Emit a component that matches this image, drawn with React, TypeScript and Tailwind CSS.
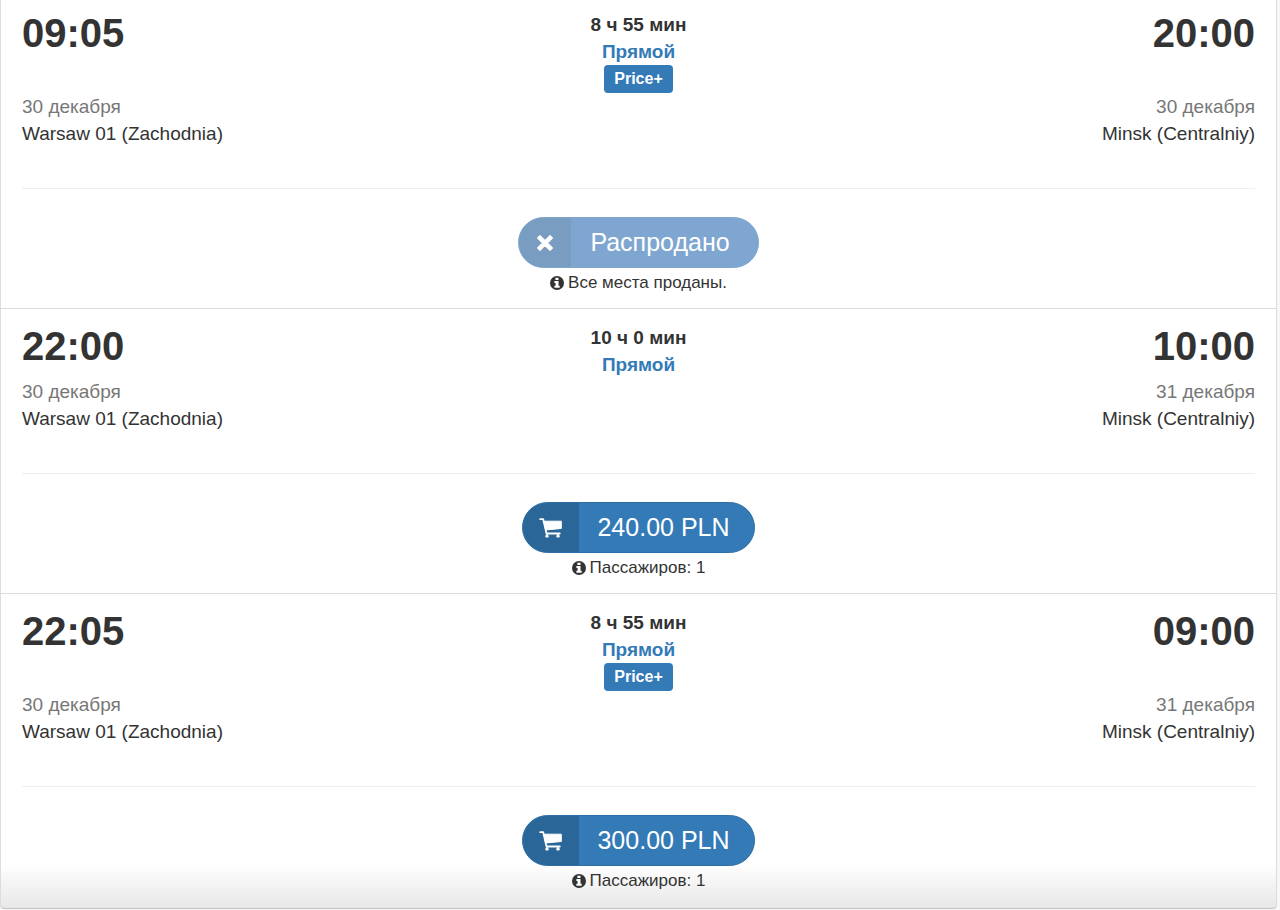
interface Trip {
  departure: string; arrival: string
  departureDate: string; arrivalDate: string
  duration: string; pricePlus: boolean
  price?: string; note: string
}

const trips: Trip[] = [
  {
    departure: '09:05', arrival: '20:00', departureDate: '30 декабря', arrivalDate: '30 декабря',
    duration: '8 ч 55 мин', pricePlus: true, note: 'Все места проданы.',
  },
  {
    departure: '22:00', arrival: '10:00', departureDate: '30 декабря', arrivalDate: '31 декабря',
    duration: '10 ч 0 мин', pricePlus: false, price: '240.00 PLN', note: 'Пассажиров: 1',
  },
  {
    departure: '22:05', arrival: '09:00', departureDate: '30 декабря', arrivalDate: '31 декабря',
    duration: '8 ч 55 мин', pricePlus: true, price: '300.00 PLN', note: 'Пассажиров: 1',
  },
]

function CartIcon() {
  return (
    <svg viewBox="0 0 24 20" className="h-5 w-6" fill="none" stroke="currentColor" strokeLinecap="round" strokeLinejoin="round" aria-hidden="true">
      <path d="M1.200 1.200h3l3.300 14.300h13.300M8 15.500v2M19 15.500v2" strokeWidth="1.8" />
      <path d="M5.200 3.200h17.100v7.300L7.100 11.900z" fill="currentColor" strokeWidth="1" />
      <path d="M7.500 18.300h1M18.500 18.300h1" strokeWidth="2.600" />
    </svg>
  )
}

function CrossIcon() {
  return (
    <svg viewBox="0 0 18 18" className="h-[18px] w-[18px]" fill="currentColor" stroke="currentColor" strokeLinejoin="round" aria-hidden="true">
      <path d="M9 6.700l5-5L16.300 4l-5 5 5 5-2.300 2.300-5-5-5 5L1.700 14l5-5-5-5L4 1.700z" strokeWidth="1.4" />
    </svg>
  )
}

function InfoIcon() {
  return (
    <svg viewBox="0 0 14 14" className="h-3.5 w-3.5 shrink-0" aria-hidden="true">
      <circle cx="7" cy="7" r="7" fill="currentColor" />
      <path d="M5.400 1.800h3.100v2.300H5.400zM4.400 5.100h4.100v4.600h1.200v2H4.400v-2h1.200V7H4.400z" fill="white" />
    </svg>
  )
}

function BuyButton({ price }: { price?: string }) {
  return (
    <button
      type="button"
      disabled={!price}
      className="flex h-[51px] overflow-hidden rounded-full border border-[#2e6da4] bg-[#337ab7] text-[25px] text-white disabled:border-[#7ea6d0] disabled:bg-[#7ea6d0]"
    >
      <span className={price ? 'flex h-full items-center bg-[#2b6699] px-4' : 'flex h-full items-center bg-[#789dc1] px-[17px]'}>
        {price ? <CartIcon /> : <CrossIcon />}
      </span>
      <span className={price ? 'flex h-full items-center pr-6 pl-[18px]' : 'flex h-full items-center pr-7 pl-[19px]'}>
        {price ?? 'Распродано'}
      </span>
    </button>
  )
}

function TripRow({ trip }: { trip: Trip }) {
  return (
    <li className="border-b border-[#ddd] px-[21px] pt-[15px] pb-3 first:pt-[11px] last:rounded-b last:border-[#c4c4c4] last:pb-3.5">
      <div className="grid grid-cols-3">
        <time className="text-[40px] leading-11 font-bold">{trip.departure}</time>
        <div className="flex flex-col items-center font-bold">
          <span>{trip.duration}</span>
          <a href="#route" className="text-[#337ab7]">Прямой</a>
          {trip.pricePlus && (
            <span className="rounded bg-[#337ab7] px-2.5 text-base leading-7 text-white">Price+</span>
          )}
        </div>
        <time className="text-right text-[40px] leading-11 font-bold">{trip.arrival}</time>
      </div>
      <div className="flex justify-between">
        <div>
          <div className="text-[#777]">{trip.departureDate}</div>
          <div>Warsaw 01 (Zachodnia)</div>
        </div>
        <div className="text-right">
          <div className="text-[#777]">{trip.arrivalDate}</div>
          <div>Minsk (Centralniy)</div>
        </div>
      </div>
      <hr className="mt-[41px] mb-7 border-[#eee]" />
      <div className="flex flex-col items-center gap-px">
        <BuyButton price={trip.price} />
        <div className="flex items-center gap-1 text-[17px] leading-[27px]">
          <InfoIcon />
          {trip.note}
        </div>
      </div>
    </li>
  )
}

export default function App() {
  return (
    <main className="bg-[#f7f7f7] pr-[3px] pb-px font-['Liberation_Sans',Arial,sans-serif] text-[19px] leading-[27px] text-[#333]">
      <ul className="rounded-b border-x border-[#ddd] bg-white bg-linear-to-t from-[#e7e7e7] to-white to-[46px]">
        {trips.map((trip) => (
          <TripRow key={trip.departure} trip={trip} />
        ))}
      </ul>
    </main>
  )
}
